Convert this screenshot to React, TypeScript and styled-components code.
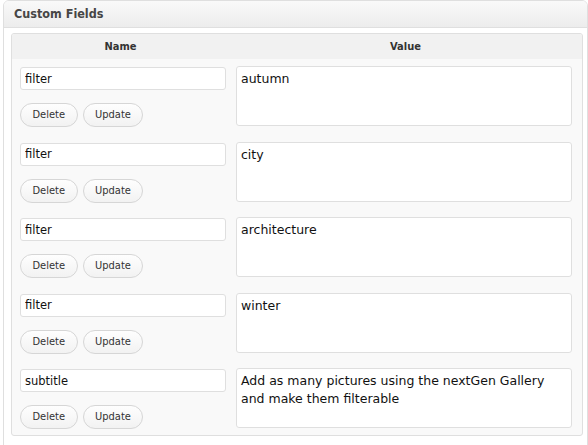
import React from "react";
import styled, { createGlobalStyle } from "styled-components";

const GlobalStyle = createGlobalStyle`
  html, body {
    margin: 0;
    padding: 0;
    overflow: hidden;
    background: #ffffff;
  }
  * { box-sizing: border-box; }
`;

const Panel = styled.section`
  margin-left: 3px;
  width: 585px;
  border: 1px solid #dfdfdf;
  border-radius: 6px 6px 0 0;
  background: #ffffff;
`;

const PanelHeader = styled.h3`
  margin: 0;
  height: 27px;
  padding-left: 10px;
  border-bottom: 1px solid #dfdfdf;
  border-radius: 5px 5px 0 0;
  background: linear-gradient(#f9f9f9, #ececec);
  font-family: "DejaVu Sans Condensed", "DejaVu Sans", sans-serif;
  font-stretch: condensed;
  font-weight: bold;
  font-size: 12.5px;
  line-height: 26px;
  color: #464646;
`;

const PanelBody = styled.div`
  padding: 5px 4px 12px 7px;
`;

const Table = styled.div`
  border: 1px solid #dfdfdf;
  border-radius: 3px;
  background: #f9f9f9;
  overflow: hidden;
`;

const HeadRow = styled.div`
  display: grid;
  grid-template-columns: 217px 1fr;
  height: 25px;
  background: #f1f1f1;
`;

const HeadCell = styled.div`
  display: flex;
  align-items: center;
  justify-content: center;
  font-family: "DejaVu Sans Condensed", "DejaVu Sans", sans-serif;
  font-stretch: condensed;
  font-weight: bold;
  font-size: 11px;
  color: #333333;
`;

const Row = styled.div`
  display: grid;
  grid-template-columns: 217px 1fr;
  height: 75.5px;
  &:last-child {
    height: 74px;
  }
`;

const NameCell = styled.div`
  display: flex;
  flex-direction: column;
  align-items: flex-start;
  padding: 8px 4px 0 8px;
`;

const NameInput = styled.input`
  width: 206px;
  height: 23px;
  margin: 0;
  padding: 0 4px;
  border: 1px solid #dfdfdf;
  border-radius: 3px;
  background: #ffffff;
  font-family: "DejaVu Sans", sans-serif;
  font-size: 11.5px;
  color: #111111;
  outline: none;
`;

const ButtonRow = styled.div`
  display: flex;
  gap: 5px;
  margin-top: 13px;
`;

const Button = styled.button`
  height: 24px;
  margin: 0;
  padding: 0 11.5px;
  border: 1px solid #d6d6d6;
  border-radius: 12px;
  background: linear-gradient(#fefefe, #f2f2f2);
  font-family: "DejaVu Sans Condensed", "DejaVu Sans", sans-serif;
  font-stretch: condensed;
  font-size: 11px;
  line-height: 22px;
  color: #333333;
  cursor: pointer;
`;

const ValueCell = styled.div`
  padding: 7px 10px 0 7px;
`;

const ValueArea = styled.textarea`
  display: block;
  width: 336px;
  height: 60px;
  margin: 0;
  padding: 3px 4px;
  border: 1px solid #dfdfdf;
  border-radius: 3px;
  background: #ffffff;
  resize: none;
  font-family: "DejaVu Sans", sans-serif;
  font-size: 12.5px;
  line-height: 17.5px;
  color: #111111;
  outline: none;
  overflow: hidden;
`;

const fields = [
  { name: "filter", value: "autumn" },
  { name: "filter", value: "city" },
  { name: "filter", value: "architecture" },
  { name: "filter", value: "winter" },
  {
    name: "subtitle",
    value: "Add as many pictures using the nextGen Gallery and make them filterable",
  },
];

export default function App() {
  return (
    <>
      <GlobalStyle />
      <Panel>
        <PanelHeader>Custom Fields</PanelHeader>
        <PanelBody>
          <Table>
            <HeadRow>
              <HeadCell>Name</HeadCell>
              <HeadCell>Value</HeadCell>
            </HeadRow>
            {fields.map((f, i) => (
              <Row key={i}>
                <NameCell>
                  <NameInput defaultValue={f.name} />
                  <ButtonRow>
                    <Button>Delete</Button>
                    <Button>Update</Button>
                  </ButtonRow>
                </NameCell>
                <ValueCell>
                  <ValueArea defaultValue={f.value} />
                </ValueCell>
              </Row>
            ))}
          </Table>
        </PanelBody>
      </Panel>
    </>
  );
}
